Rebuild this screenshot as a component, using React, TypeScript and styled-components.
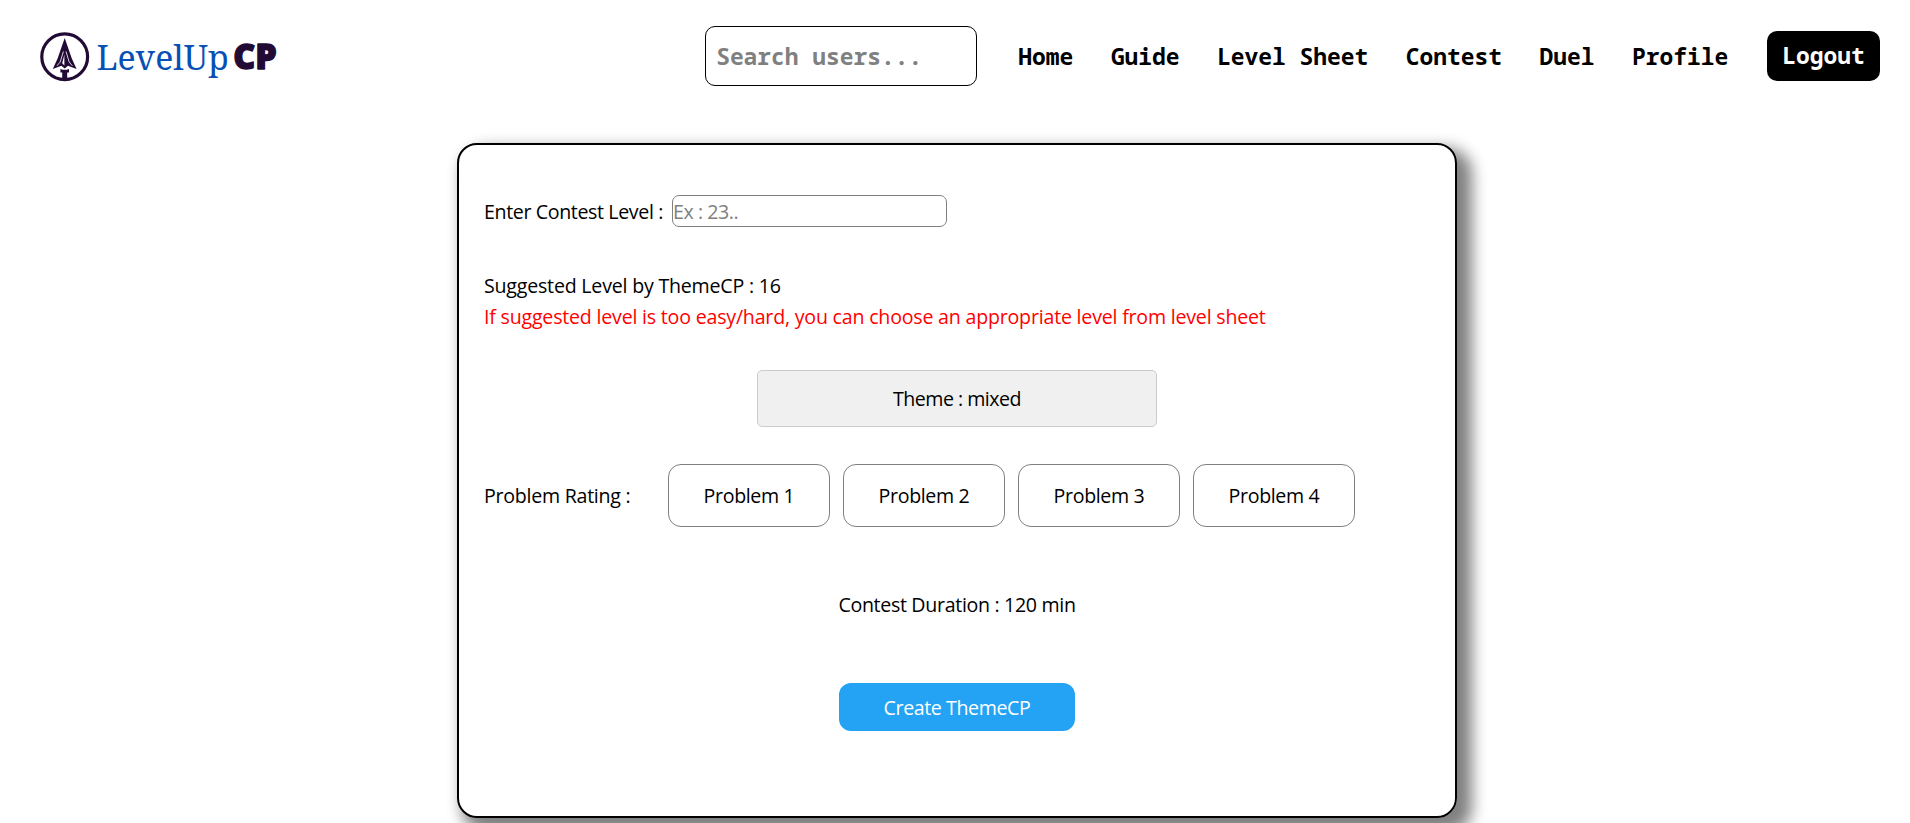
import React from "react";
import styled, { createGlobalStyle } from "styled-components";

const GlobalStyle = createGlobalStyle`
  *, *::before, *::after { box-sizing: border-box; }
  html, body { margin: 0; overflow: hidden; }
  #root { height: 823px; overflow: hidden; }
  body {
    background: #fff;
    color: #000;
    font-family: "Open Sans", "Noto Sans", sans-serif;
    font-size: 19.6px;
  }
`;

const mono = `"Noto Sans Mono", "DejaVu Sans Mono", monospace`;

const Header = styled.header`
  display: flex;
  align-items: center;
  justify-content: space-between;
  height: 112px;
  padding: 0 30px 0 36px;
`;

const LogoSvg = styled.svg`
  display: block;
  width: 250px;
  height: 64px;
`;

const Nav = styled.nav`
  display: flex;
  align-items: center;
  gap: 37.6px;
  font: 700 22.9px/30px ${mono};
`;

const Search = styled.input`
  width: 272px;
  height: 60px;
  margin-right: 3.6px;
  padding: 0 10px;
  border: 1px solid #000;
  border-radius: 10px;
  outline: none;
  font: 700 22.9px/30px ${mono};
  &::placeholder { color: #808080; opacity: 1; }
`;

const NavLink = styled.a`
  padding-top: 1px;
  color: #000;
  white-space: nowrap;
`;

const Logout = styled.button`
  width: 113px;
  height: 50px;
  margin-left: 1.2px;
  padding: 0;
  border: 0;
  border-radius: 10px;
  background: #000;
  color: #fff;
  font: inherit;
`;

const Card = styled.main`
  display: flex;
  flex-direction: column;
  width: 1000px;
  height: 675px;
  margin: 31px 0 0 457px;
  padding: 50px 25px;
  border: 2px solid #000;
  border-radius: 20px;
  box-shadow: 10px 10px 15px 5px #808080;
`;

const Text = styled.span<{ $spacing: number }>`
  line-height: 31px;
  letter-spacing: ${(p) => p.$spacing}px;
  white-space: nowrap;
`;

const LevelRow = styled.label`
  display: flex;
  align-items: center;
  width: 463px;
  height: 32px;
`;

const LevelInput = styled.input`
  width: 275px;
  height: 32px;
  margin-left: auto;
  padding: 1px 0 0;
  border: 1px solid #808080;
  border-radius: 7px;
  outline: none;
  font: inherit;
  letter-spacing: -0.45px;
  &::placeholder { color: #808080; opacity: 1; }
`;

const Suggestion = styled.div`
  display: flex;
  flex-direction: column;
  margin-top: 43px;
`;

const Hint = styled(Text)`
  color: #f00;
`;

const Theme = styled.div`
  display: flex;
  align-items: center;
  justify-content: center;
  align-self: center;
  width: 400px;
  height: 57px;
  margin-top: 38px;
  border: 1px solid #ccc;
  border-radius: 5px;
  background: #f0f0f0;
`;

const Ratings = styled.div`
  display: flex;
  align-items: center;
  height: 63px;
  margin-top: 37px;
`;

const RatingLabel = styled.div`
  width: 184px;
`;

const ProblemList = styled.div`
  display: flex;
  gap: 13px;
`;

const Problem = styled.div`
  display: flex;
  align-items: center;
  justify-content: center;
  width: 162px;
  height: 63px;
  border: 1px solid #808080;
  border-radius: 13px;
`;

const Duration = styled.div`
  display: flex;
  justify-content: center;
  margin-top: 62px;
`;

const CreateButton = styled.button`
  align-self: center;
  width: 236px;
  height: 48px;
  margin-top: 63px;
  padding: 0;
  border: 0;
  border-radius: 12px;
  background: #24a3f5;
  color: #fff;
  font: inherit;
`;

const links = ["Home", "Guide", "Level Sheet", "Contest", "Duel", "Profile"];

function Logo() {
  return (
    <LogoSvg viewBox="36 24 250 64" role="img" aria-label="LevelUp CP">
      <circle cx="64.7" cy="56.7" r="22.9" fill="none" stroke="#210b35" strokeWidth="3.2" />
      <path d="M64.7 38 L71.8 58.5 L76.6 69 L68 65.8 L64.7 68.4 L61.4 65.8 L52.8 69 L57.6 58.5 Z" fill="#210b35" />
      <path d="M63.4 51.5 L60.2 62 L57 65.8 M66 51.5 L69.2 62 L72.4 65.8" fill="none" stroke="#fff" strokeWidth="0.8" />
      <path d="M64.4 54.5 V65.5 L62.2 63.3 Z" fill="#fff" />
      <path d="M60.4 69 L62.6 69.8 H66.8 L69 69 V72.6 H67.2 V80 H62.2 V72.6 H60.4 Z" fill="#210b35" />
      <text x="96.4" y="69.6" textLength="132.4" lengthAdjust="spacingAndGlyphs" fontFamily="'Noto Serif', 'Liberation Serif', serif" fontSize="34.5" fill="#0750b4">LevelUp</text>
      <text x="233.3" y="69.3" fontFamily="'Noto Sans', 'Open Sans', sans-serif" textLength="43.5" lengthAdjust="spacingAndGlyphs" fontWeight="900" fontSize="35.5" fill="#210b35" stroke="#210b35" strokeWidth="1.4" strokeLinejoin="round">CP</text>
    </LogoSvg>
  );
}

export default function App() {
  return (
    <>
      <GlobalStyle />
      <Header>
        <Logo />
        <Nav>
          <Search placeholder="Search users..." />
          {links.map((l) => (
            <NavLink key={l}>{l}</NavLink>
          ))}
          <Logout>Logout</Logout>
        </Nav>
      </Header>
      <Card>
        <LevelRow>
          <Text $spacing={-0.37}>Enter Contest Level :</Text>
          <LevelInput placeholder="Ex : 23.." />
        </LevelRow>
        <Suggestion>
          <Text $spacing={-0.21}>Suggested Level by ThemeCP : 16</Text>
          <Hint $spacing={-0.205}>
            If suggested level is too easy/hard, you can choose an appropriate level from level sheet
          </Hint>
        </Suggestion>
        <Theme>
          <Text $spacing={-0.5}>Theme : mixed</Text>
        </Theme>
        <Ratings>
          <RatingLabel>
            <Text $spacing={-0.26}>Problem Rating :</Text>
          </RatingLabel>
          <ProblemList>
            {[1, 2, 3, 4].map((n) => (
              <Problem key={n}>
                <Text $spacing={-0.35}>Problem {n}</Text>
              </Problem>
            ))}
          </ProblemList>
        </Ratings>
        <Duration>
          <Text $spacing={-0.32}>Contest Duration : 120 min</Text>
        </Duration>
        <CreateButton>
          <Text $spacing={-0.4}>Create ThemeCP</Text>
        </CreateButton>
      </Card>
    </>
  );
}
